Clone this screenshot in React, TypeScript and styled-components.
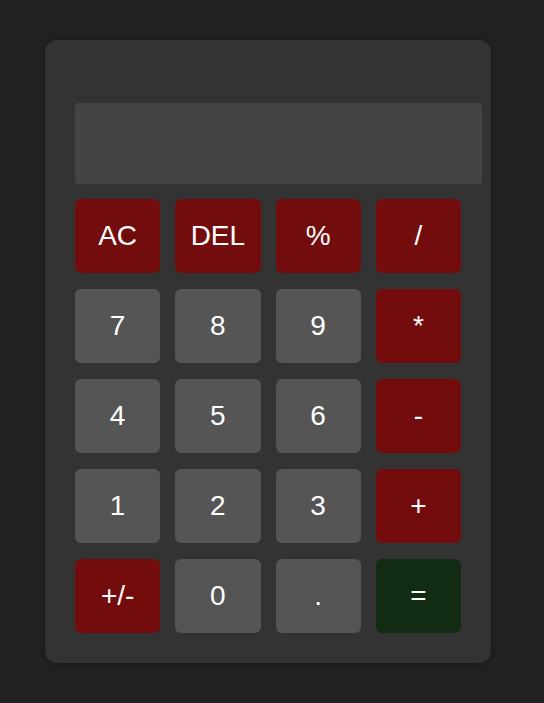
import React from "react";
import styled, { createGlobalStyle } from "styled-components";

const Global = createGlobalStyle`
  html, body { margin: 0; padding: 0; background: #222222; }
  body { font-family: "Liberation Sans", Arial, sans-serif; }
`;

const Page = styled.div`
  width: 544px;
  height: 703px;
  padding: 40px 0 0 45px;
  box-sizing: border-box;
`;

const Card = styled.div`
  width: 446px;
  height: 623px;
  box-sizing: border-box;
  background: #333333;
  border-radius: 12px;
  box-shadow: 0 0 10px rgba(0, 0, 0, 0.35);
  padding: 63px 9px 30px 30px;
  display: flex;
  flex-direction: column;
  gap: 15px;
`;

const Display = styled.div`
  height: 81px;
  background: #444444;
  border-radius: 3px;
  color: #fff;
  font-size: 32px;
  display: flex;
  align-items: center;
  justify-content: flex-end;
  padding: 0 12px;
`;

const Grid = styled.div`
  width: 386px;
  display: grid;
  grid-template-columns: repeat(4, 1fr);
  grid-auto-rows: 74px;
  column-gap: 15px;
  row-gap: 16px;
`;

type Kind = "num" | "op" | "eq";
const colors: Record<Kind, string> = {
  num: "#555555",
  op: "#730d0d",
  eq: "#122c14",
};

const Key = styled.button<{ $kind: Kind }>`
  border: none;
  border-radius: 6px;
  background: ${(p) => colors[p.$kind]};
  color: #ffffff;
  font-family: "Liberation Sans", Arial, sans-serif;
  font-size: 28px;
  padding: 0;
  display: flex;
  align-items: center;
  justify-content: center;
  cursor: pointer;
`;

const keys: [string, Kind][] = [
  ["AC", "op"], ["DEL", "op"], ["%", "op"], ["/", "op"],
  ["7", "num"], ["8", "num"], ["9", "num"], ["*", "op"],
  ["4", "num"], ["5", "num"], ["6", "num"], ["-", "op"],
  ["1", "num"], ["2", "num"], ["3", "num"], ["+", "op"],
  ["+/-", "op"], ["0", "num"], [".", "num"], ["=", "eq"],
];

export default function App() {
  return (
    <>
      <Global />
      <Page>
        <Card>
          <Display />
          <Grid>
            {keys.map(([label, kind]) => (
              <Key key={label} $kind={kind}>
                {label}
              </Key>
            ))}
          </Grid>
        </Card>
      </Page>
    </>
  );
}
